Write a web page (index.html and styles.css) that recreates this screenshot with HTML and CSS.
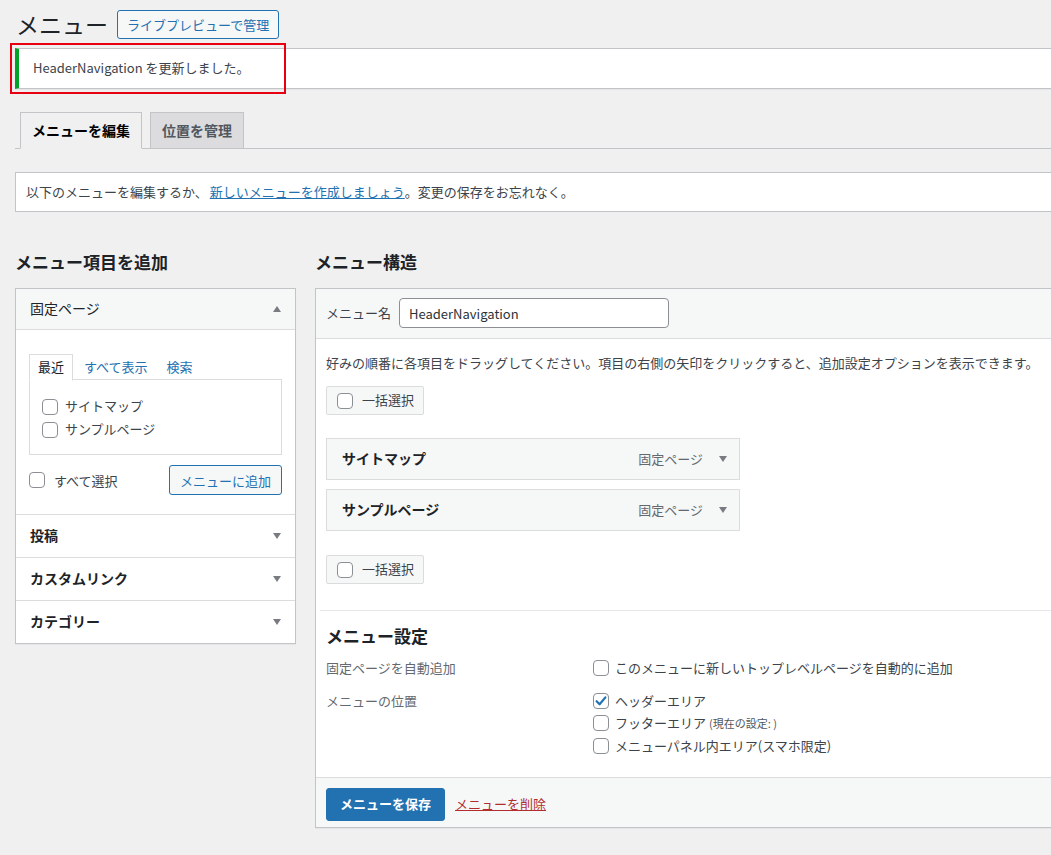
FILE: index.html
```html
<!DOCTYPE html>
<html lang="ja">
<head>
<meta charset="utf-8">
<title>メニュー</title>
<link rel="stylesheet" href="styles.css">
</head>
<body>
<div class="wrap">
  <div class="page-head">
    <h1 class="page-title">メニュー</h1>
    <a class="btn-outline" href="#">ライブプレビューで管理</a>
  </div>

  <div class="notice-wrap">
    <div class="notice"><p>HeaderNavigation を更新しました。</p></div>
    <div class="annot"></div>
  </div>

  <nav class="nav-tabs">
    <a class="nav-tab active" href="#">メニューを編集</a>
    <a class="nav-tab" href="#">位置を管理</a>
  </nav>

  <div class="info-box">以下のメニューを編集するか、<a href="#">新しいメニューを作成しましょう</a>。変更の保存をお忘れなく。</div>

  <div class="cols">
    <div class="col-left">
      <h2 class="col-title">メニュー項目を追加</h2>
      <div class="acc">
        <div class="acc-sec">
          <div class="acc-head"><span class="acc-name">固定ページ</span><span class="tri tri-up"></span></div>
          <div class="acc-body">
            <ul class="subtabs">
              <li class="subtab active">最近</li>
              <li class="subtab"><a href="#">すべて表示</a></li>
              <li class="subtab"><a href="#">検索</a></li>
            </ul>
            <div class="subpanel">
              <label class="cb-row"><span class="cb"></span>サイトマップ</label>
              <label class="cb-row"><span class="cb"></span>サンプルページ</label>
            </div>
            <div class="acc-actions">
              <label class="cb-row"><span class="cb"></span><span class="sel-all">すべて選択</span></label>
              <a class="btn-outline btn-small" href="#">メニューに追加</a>
            </div>
          </div>
        </div>
        <div class="acc-sec closed"><div class="acc-head"><span class="acc-name bold">投稿</span><span class="tri"></span></div></div>
        <div class="acc-sec closed"><div class="acc-head"><span class="acc-name bold">カスタムリンク</span><span class="tri"></span></div></div>
        <div class="acc-sec closed last"><div class="acc-head"><span class="acc-name bold">カテゴリー</span><span class="tri"></span></div></div>
      </div>
    </div>

    <div class="col-right">
      <h2 class="col-title">メニュー構造</h2>
      <div class="menu-box">
        <div class="menu-head">
          <label class="menu-name-label">メニュー名</label>
          <input class="menu-name-input" type="text" value="HeaderNavigation">
        </div>
        <div class="menu-body">
          <p class="drag-hint">好みの順番に各項目をドラッグしてください。項目の右側の矢印をクリックすると、追加設定オプションを表示できます。</p>
          <div class="bulk"><span class="cb"></span>一括選択</div>
          <ul class="items">
            <li class="item"><span class="item-title">サイトマップ</span><span class="item-type">固定ページ</span><span class="tri"></span></li>
            <li class="item"><span class="item-title">サンプルページ</span><span class="item-type">固定ページ</span><span class="tri"></span></li>
          </ul>
          <div class="bulk bulk-2"><span class="cb"></span>一括選択</div>

          <div class="settings">
            <h3 class="settings-title">メニュー設定</h3>
            <div class="set-row">
              <div class="set-label">固定ページを自動追加</div>
              <div class="set-opts">
                <label class="opt"><span class="cb"></span>このメニューに新しいトップレベルページを自動的に追加</label>
              </div>
            </div>
            <div class="set-row">
              <div class="set-label">メニューの位置</div>
              <div class="set-opts">
                <label class="opt"><span class="cb checked"><svg viewBox="0 0 16 16" width="16" height="16"><path d="M3.6 8.2 L6.6 11.3 L12.4 4.4" fill="none" stroke="#2271b1" stroke-width="2.2" stroke-linecap="round" stroke-linejoin="round"/></svg></span>ヘッダーエリア</label>
                <label class="opt"><span class="cb"></span>フッターエリア<span class="small-note">(現在の設定: )</span></label>
                <label class="opt"><span class="cb"></span>メニューパネル内エリア(スマホ限定)</label>
              </div>
            </div>
          </div>
        </div>
        <div class="menu-foot">
          <a class="btn-primary" href="#">メニューを保存</a>
          <a class="delete-link" href="#">メニューを削除</a>
        </div>
      </div>
    </div>
  </div>
</div>
</body>
</html>
```

FILE: styles.css
```css
* { box-sizing: border-box; }
html, body { margin: 0; padding: 0; background: #f0f0f1; }
body {
  font-family: "Noto Sans CJK JP", "Noto Sans", sans-serif;
  font-size: 13px;
  line-height: 1.4;
  color: #3c434a;
  overflow: hidden;
}
a { color: #2271b1; }

.wrap {
  padding: 10px 0 40px 15px;
  margin-right: -30px;
}

/* header */
.page-head { display: flex; align-items: center; height: 29px; }
.page-title {
  margin: 0 9px 0 1px;
  font-size: 23px;
  font-weight: 400;
  line-height: 29px;
  color: #1d2327;
}
.btn-outline {
  display: inline-flex;
  align-items: center;
  height: 29px;
  padding: 0 9px;
  border: 1px solid #2271b1;
  border-radius: 3px;
  background: #f6f7f7;
  color: #2271b1;
  text-decoration: none;
  font-size: 13px;
  line-height: 1;
}

/* notice */
.notice-wrap { position: relative; margin-top: 9px; }
.notice {
  height: 41px;
  background: #fff;
  border: 1px solid #c3c4c7;
  border-left: 4px solid #00a32a;
  box-shadow: 0 1px 1px rgba(0,0,0,.04);
  display: flex;
  align-items: center;
  padding-left: 14px;
}
.notice p { margin: 0; color: #3c434a; }
.annot {
  position: absolute;
  left: -5px;
  top: -5px;
  width: 276px;
  height: 51px;
  border: 2px solid #e60012;
}

/* nav tabs */
.nav-tabs {
  display: flex;
  margin-top: 23px;
  padding-left: 5px;
  border-bottom: 1px solid #c3c4c7;
  height: 37px;
}
.nav-tab {
  display: flex;
  align-items: center;
  height: 37px;
  padding: 0 11px;
  margin-right: 8px;
  border: 1px solid #c3c4c7;
  background: #dcdcde;
  color: #50575e;
  font-size: 14px;
  font-weight: 700;
  text-decoration: none;
}
.nav-tab.active {
  background: #f0f0f1;
  color: #000;
  border-bottom-color: #f0f0f1;
}

/* info */
.info-box {
  margin-top: 23px;
  height: 40px;
  background: #fff;
  border: 1px solid #c3c4c7;
  display: flex;
  align-items: center;
  padding-left: 10px;
}
.info-box a { margin-left: 2px; }

/* columns */
.cols { display: flex; gap: 19px; margin-top: 38px; align-items: flex-start; }
.col-left { width: 281px; flex: none; }
.col-right { flex: 1; }
.col-title {
  margin: 0 0 14px 0;
  font-size: 17px;
  line-height: 24px;
  font-weight: 700;
  color: #1d2327;
}

/* accordion */
.acc {
  background: #fff;
  border: 1px solid #c3c4c7;
  box-shadow: 0 1px 1px rgba(0,0,0,.04);
}
.acc-sec { border-bottom: 1px solid #dcdcde; }
.acc-sec.last { border-bottom: 0; }
.acc-head {
  height: 42px;
  display: flex;
  align-items: center;
  justify-content: space-between;
  padding: 0 14px 0 14px;
  color: #1d2327;
  font-size: 14px;
}
.acc-sec:first-child .acc-head {
  height: 41px;
  background: #f6f7f7;
  border-bottom: 1px solid #dcdcde;
}
.acc-name.bold { font-weight: 700; }

.tri {
  width: 0; height: 0;
  border-left: 4px solid transparent;
  border-right: 4px solid transparent;
  border-top: 6px solid #787c82;
}
.tri.tri-up {
  border-top: 0;
  border-bottom: 6px solid #787c82;
}

.acc-body { padding: 24px 13px 19px 13px; }
.subtabs {
  list-style: none;
  margin: 0;
  padding: 0;
  display: flex;
  height: 26px;
}
.subtab { display: flex; align-items: center; height: 26px; }
.subtab.active {
  padding: 0 8px;
  border: 1px solid #dcdcde;
  border-bottom: 1px solid #fff;
  color: #1d2327;
  position: relative;
  z-index: 1;
  height: 27px;
  background: #fff;
}
.subtab a { padding: 0 8px; margin-left: 3px; text-decoration: none; }
.subpanel {
  margin-top: -1px;
  border: 1px solid #dcdcde;
  height: 76px;
  padding: 15px 12px 0 12px;
}
.cb-row { display: flex; align-items: center; height: 23px; color: #3c434a; }
.cb {
  display: inline-block;
  flex: none;
  width: 16px;
  height: 16px;
  border: 1px solid #8c8f94;
  border-radius: 4px;
  background: #fff;
  margin-right: 7px;
  position: relative;
}
.cb svg { position: absolute; left: -1px; top: -1px; }
.acc-actions {
  margin-top: 10px;
  height: 30px;
  display: flex;
  align-items: center;
  justify-content: space-between;
}
.acc-actions .cb { margin-right: 9px; }
.sel-all { position: relative; top: 1px; }
.btn-small { height: 30px; padding: 0 10px; }

/* menu structure */
.menu-box {
  background: #fff;
  border: 1px solid #c3c4c7;
  box-shadow: 0 1px 1px rgba(0,0,0,.04);
}
.menu-head {
  display: flex;
  align-items: center;
  padding: 9px 10px 10px 10px;
  background: #f6f7f7;
  border-bottom: 1px solid #dcdcde;
}
.menu-name-label { margin-right: 8px; color: #3c434a; }
.menu-name-input {
  width: 270px;
  height: 30px;
  border: 1px solid #8c8f94;
  border-radius: 4px;
  padding: 0 9px;
  font-family: "Noto Sans CJK JP", "Noto Sans", sans-serif;
  font-size: 13px;
  color: #2c3338;
  background: #fff;
}
.menu-body { padding: 14px 10px 0 10px; }
.drag-hint { margin: 0; line-height: 20px; }
.bulk {
  display: inline-flex;
  align-items: center;
  margin-top: 13px;
  height: 29px;
  width: 98px;
  padding-left: 10px;
  background: #f6f7f7;
  border: 1px solid #dcdcde;
  border-radius: 2px;
  color: #3c434a;
}
.bulk .cb { margin-right: 9px; }
.bulk-2 { margin-top: 24px; }
.items { list-style: none; margin: 23px 0 0 0; padding: 0; }
.item {
  width: 414px;
  height: 42px;
  display: flex;
  align-items: center;
  padding: 0 12px 0 15px;
  background: #f6f7f7;
  border: 1px solid #dcdcde;
  margin-bottom: 9px;
}
.item:last-child { margin-bottom: 0; }
.item-title { flex: 1; font-size: 14px; font-weight: 700; color: #1d2327; }
.item-type { color: #646970; margin-right: 16px; }

.settings {
  margin: 26px 0 0 -6px;
  padding: 13px 0 0 6px;
  border-top: 1px solid #e8e8ea;
}
.settings-title {
  margin: 0;
  font-size: 17px;
  line-height: 24px;
  font-weight: 700;
  color: #1d2327;
}
.set-row { display: flex; margin-top: 9px; }
.set-row + .set-row { margin-top: 10px; }
.set-label { width: 267px; flex: none; line-height: 22px; color: #646970; }
.set-opts { display: flex; flex-direction: column; padding-bottom: 20px; }
.set-row:first-of-type .set-opts { padding-bottom: 0; }
.opt { display: flex; align-items: center; height: 22.5px; color: #3c434a; }
.opt .cb { margin-right: 6px; }
.small-note { font-size: 11px; margin-left: 3px; color: #50575e; }

.menu-foot {
  display: flex;
  align-items: center;
  padding: 10px 10px 6px 10px;
  background: #f6f7f7;
  border-top: 1px solid #dcdcde;
}
.btn-primary {
  display: inline-flex;
  align-items: center;
  height: 33px;
  padding: 0 13px;
  background: #2271b1;
  border: 1px solid #2271b1;
  border-radius: 3px;
  color: #fff;
  font-weight: 600;
  text-decoration: none;
}
.delete-link { margin-left: 10px; color: #b32d2e; text-decoration: underline; }
```
